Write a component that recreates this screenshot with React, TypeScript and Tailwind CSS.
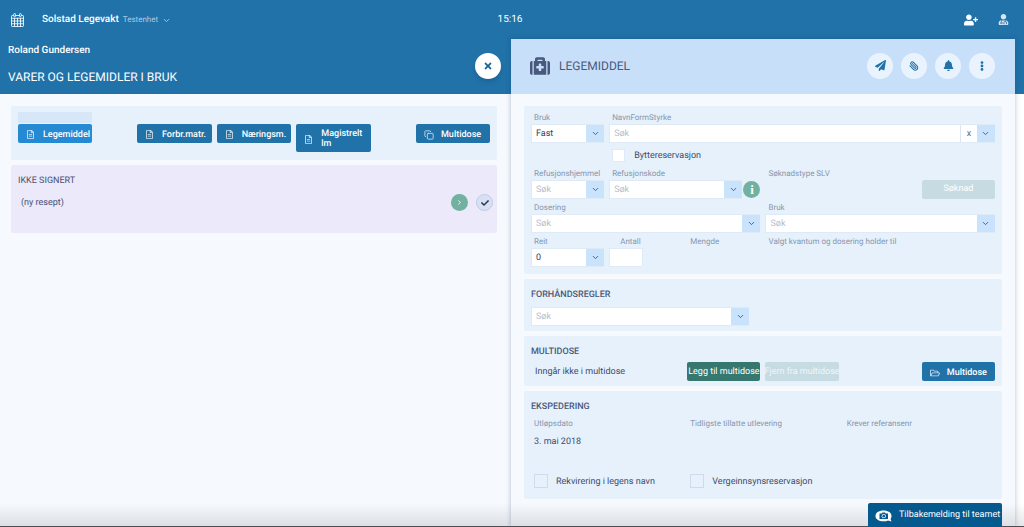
import type { ReactNode } from 'react';
import {
  FaBell,
  FaCheck,
  FaEllipsisV,
  FaMedkit,
  FaPaperPlane,
  FaRegFileAlt,
  FaRegFolderOpen,
  FaTimes,
  FaUserMd,
  FaUserPlus,
} from 'react-icons/fa';
import { ChevronDown, ChevronRight, Copy, Paperclip } from 'lucide-react';
import clsx from 'clsx';

const CalendarIcon = () => (
  <svg viewBox="0 0 26 28" className="h-[14px] w-[13px]" fill="none" stroke="currentColor" strokeWidth="1.7">
    <rect x="1" y="5" width="24" height="22" rx="1.5" />
    <path d="M1 10.500h24M1 16h24M1 21.500h24M7 10.500v16.500M13 10.500v16.500M19 10.500v16.500" />
    <rect x="5.5" y="1" width="3.4" height="6.5" rx="1.5" fill="#2072a9" />
    <rect x="17" y="1" width="3.4" height="6.5" rx="1.5" fill="#2072a9" />
  </svg>
);

const FeedbackIcon = () => (
  <svg viewBox="0 0 34 24" className="h-3 w-[17px] shrink-0">
    <path d="M17 1C7.500 1 1 5.500 1 12s6.500 10.500 16 10.500c3.500 0 6.500-.6 9-1.700L33 23l-1.800-5.200C32.400 16 33 14 33 12 33 5.500 26.500 1 17 1z" fill="#fff" />
    <path d="M9 7h4.500l1.500-2h5l1.500 2H26v11H9z" fill="#04598f" />
    <circle cx="17.500" cy="12.300" r="4.200" fill="#fff" />
    <circle cx="17.500" cy="12.300" r="2.600" fill="#04598f" />
  </svg>
);

interface FieldProps {
  id: string;
  label: string;
  className?: string;
  labelClass?: string;
  children?: ReactNode;
}

const Field = ({ id, label, className, labelClass, children }: FieldProps) => (
  <div className={className}>
    <label htmlFor={id} className={clsx('block h-3 whitespace-nowrap text-[8px] leading-3 text-[#8796ae]', labelClass ?? 'pl-[3px]')}>
      {label}
    </label>
    {children}
  </div>
);

const Arrow = ({ label }: { label: string }) => (
  <button type="button" aria-label={label} className="flex w-[18px] shrink-0 items-center justify-center bg-[#cae3fd] text-[#3f5f86]">
    <ChevronDown size={9} strokeWidth={2.5} />
  </button>
);

const SearchBox = ({ id, label, clearable, className }: { id: string; label: string; clearable?: boolean; className?: string }) => (
  <div className={clsx('flex h-[19px] border border-r-0 border-[#deebf7]', className)}>
    <input
      id={id}
      type="text"
      placeholder="Søk"
      className="min-w-0 flex-1 bg-white pl-1 pt-[2px] text-[9px] text-[#3d4b69] outline-none placeholder:text-[#b9bdc6]"
    />
    {clearable && (
      <button type="button" aria-label="Tøm" className="w-[17px] border-l border-[#dde6f0] bg-white text-[9px] leading-3 text-[#5b6474]">
        x
      </button>
    )}
    <Arrow label={label} />
  </div>
);

const SelectBox = ({ id, value }: { id: string; value: string }) => (
  <div className="flex h-[19px] border border-r-0 border-[#deebf7]">
    <select id={id} className="min-w-0 flex-1 appearance-none bg-white pl-1 pt-[2px] text-[9px] text-[#34405c] outline-none">
      <option>{value}</option>
    </select>
    <span className="pointer-events-none flex w-[18px] items-center justify-center bg-[#cae3fd] text-[#3f5f86]">
      <ChevronDown size={9} strokeWidth={2.5} />
    </span>
  </div>
);

interface IconButtonProps {
  icon: ReactNode;
  children: ReactNode;
  active?: boolean;
}

const IconButton = ({ icon, children, active }: IconButtonProps) => (
  <button
    type="button"
    className={clsx(
      'flex min-h-[19px] w-full items-center gap-2 rounded-[2px] pb-[3px] pl-2 pt-[5px] text-left text-[9px] font-medium leading-[10px] text-white',
      active ? 'bg-[#2589d3]' : 'bg-[#2072a9]',
    )}
  >
    <span className="w-[9px] shrink-0 opacity-80">{icon}</span>
    {children}
  </button>
);

const RoundButton = ({ label, children }: { label: string; children: ReactNode }) => (
  <button type="button" aria-label={label} className="flex size-[26px] items-center justify-center rounded-full bg-[#e9f3fe] text-[#2072a9]">
    {children}
  </button>
);

const Section = ({ title, children }: { title: string; children: ReactNode }) => (
  <section className="rounded-[2px] bg-[#e6f1fc] px-[7px] pt-[10px]">
    <h3 className="text-[9px] font-medium leading-3 text-[#4a5878]">{title}</h3>
    {children}
  </section>
);

const Check = ({ id, label }: { id: string; label: string }) => (
  <div className="col-span-2 flex items-center gap-2 pl-[3px]">
    <input id={id} type="checkbox" className="size-[14px] appearance-none border border-[#cddbea]" />
    <label htmlFor={id} className="pt-px text-[9px] leading-3 text-[#3f4d6d]">{label}</label>
  </div>
);

const TopBar = () => (
  <header className="grid h-[39px] grid-cols-[1fr_auto_1fr] items-center bg-[#2072a9] pl-[11px] pr-[15px] text-white">
    <div className="flex items-center">
      <CalendarIcon />
      <span className="ml-[18px] text-[10px] font-medium leading-3">Solstad Legevakt</span>
      <button type="button" className="ml-1 flex items-center gap-1 pt-px text-[8px] leading-3 text-[#a9cbe6]">
        Testenhet
        <ChevronDown size={9} strokeWidth={2.5} />
      </button>
    </div>
    <time className="text-[10px] leading-3">15:16</time>
    <div className="flex items-center justify-end gap-5">
      <button type="button" aria-label="Legg til pasient"><FaUserPlus size={14} /></button>
      <button type="button" aria-label="Bruker" className="text-[#d3e6f5]"><FaUserMd size={11} /></button>
    </div>
  </header>
);

const LeftPane = () => (
  <div className="bg-[#f6faff]">
    <div className="flex h-[55px] items-center justify-between bg-[#2072a9] pb-[2px] pl-2 pr-[10px] text-white">
      <div className="flex flex-col gap-3 pb-1">
        <p className="text-[10px] font-medium leading-[14px]">Roland Gundersen</p>
        <h1 className="text-[12px] leading-[14px]">VARER OG LEGEMIDLER I BRUK</h1>
      </div>
      <button type="button" aria-label="Lukk" className="flex size-[26px] items-center justify-center rounded-full bg-white text-[#1c6296] shadow-md">
        <FaTimes size={10} />
      </button>
    </div>
    <div className="flex flex-col gap-[5px] pl-[11px] pr-[14px] pt-3">
      <div className="flex min-h-[54px] items-start justify-between rounded-[2px] bg-[#e6f1fc] px-[7px] pb-2 pt-[6px]">
        <div className="w-[74px]">
          <div className="mb-px h-[11px] bg-[#d7e7f8]" />
          <IconButton icon={<FaRegFileAlt size={9} />} active>Legemiddel</IconButton>
        </div>
        <div className="grid w-[234px] grid-cols-3 items-start gap-[5px] pt-3">
          <IconButton icon={<FaRegFileAlt size={9} />}>Forbr.matr.</IconButton>
          <IconButton icon={<FaRegFileAlt size={9} />}>Næringsm.</IconButton>
          <IconButton icon={<FaRegFileAlt size={9} />}>Magistrelt lm</IconButton>
        </div>
        <div className="w-[74px] pt-3">
          <IconButton icon={<Copy size={10} strokeWidth={2} />}>Multidose</IconButton>
        </div>
      </div>
      <section className="rounded-[2px] bg-[#ebe9fa] pb-[22px] pl-[7px] pr-1 pt-[10px] text-[9px] leading-3 text-[#4a5070]">
        <h2>IKKE SIGNERT</h2>
        <div className="mt-[7px] flex items-center gap-2 pl-[3px]">
          <span className="flex-1">(ny resept)</span>
          <button type="button" aria-label="Åpne" className="flex size-[17px] items-center justify-center rounded-full bg-[#72b0a0] text-white">
            <ChevronRight size={7} strokeWidth={3} />
          </button>
          <button type="button" aria-label="Signer" className="flex size-[17px] items-center justify-center rounded-full border border-[#bfcbe6] bg-[#d9e0f4] text-[#2b3558]">
            <FaCheck size={8} />
          </button>
        </div>
      </section>
    </div>
  </div>
);

const DrugForm = () => (
  <form className="grid grid-cols-6 gap-x-[5px] gap-y-[3px] rounded-[2px] bg-[#e6f1fc] px-[7px] pb-[7px] pt-[6px]">
    <Field id="bruk" label="Bruk"><SelectBox id="bruk" value="Fast" /></Field>
    <Field id="navn" label="NavnFormStyrke" className="col-span-5">
      <SearchBox id="navn" label="Velg legemiddel" clearable />
    </Field>
    <div className="col-span-4 col-start-2 flex h-[19px] items-center gap-[9px] pl-[3px]">
      <input id="bytte" type="checkbox" className="size-[13px] appearance-none border border-[#deebf7] bg-white" />
      <label htmlFor="bytte" className="text-[9px] leading-3 text-[#3f4d6d]">Byttereservasjon</label>
    </div>
    <Field id="hjemmel" label="Refusjonshjemmel" className="col-start-1">
      <SearchBox id="hjemmel" label="Velg refusjonshjemmel" />
    </Field>
    <Field id="kode" label="Refusjonskode" className="col-span-2">
      <div className="flex items-center gap-px">
        <SearchBox id="kode" label="Velg refusjonskode" className="min-w-0 flex-1" />
        <button type="button" aria-label="Informasjon" className="size-[17px] shrink-0 rounded-full bg-[#72b0a0] font-['Liberation_Serif',serif] text-[13px] font-bold leading-none text-white">
          i
        </button>
      </div>
    </Field>
    <Field id="soknad" label="Søknadstype SLV" className="col-span-2" />
    <button id="soknad" type="button" disabled className="h-[19px] self-end rounded-[2px] bg-[#c7dce2] pt-px text-[9px] text-white">
      Søknad
    </button>
    <Field id="dosering" label="Dosering" className="col-span-3"><SearchBox id="dosering" label="Velg dosering" /></Field>
    <Field id="bruk2" label="Bruk" className="col-span-3"><SearchBox id="bruk2" label="Velg bruk" /></Field>
    <Field id="reit" label="Reit"><SelectBox id="reit" value="0" /></Field>
    <Field id="antall" label="Antall" labelClass="pl-[11px]">
      <input id="antall" type="text" className="block h-[19px] w-[34px] border border-[#deebf7] bg-white px-1 text-[9px] outline-none" />
    </Field>
    <p className="pl-[3px] text-[8px] leading-3 text-[#8796ae]">Mengde</p>
    <p className="col-span-3 pl-[3px] text-[8px] leading-3 text-[#8796ae]">Valgt kvantum og dosering holder til</p>
  </form>
);

const RightPane = () => (
  <div className="relative bg-[#f6faff] shadow-[0_0_5px_rgba(30,50,90,0.3)]">
    <div className="flex h-[55px] items-center bg-[#c8dff9] pb-[2px] pl-[19px] pr-5">
      <FaMedkit size={20} className="text-[#48597d]" />
      <h2 className="ml-[9px] flex-1 text-[12px] text-[#48597d]">LEGEMIDDEL</h2>
      <div className="flex gap-2">
        <RoundButton label="Send"><FaPaperPlane size={11} /></RoundButton>
        <RoundButton label="Vedlegg"><Paperclip size={10} strokeWidth={2.5} className="-scale-x-100" /></RoundButton>
        <RoundButton label="Varsler"><FaBell size={11} /></RoundButton>
        <RoundButton label="Mer"><FaEllipsisV size={10} /></RoundButton>
      </div>
    </div>
    <div className="flex flex-col gap-[5px] px-[13px] pb-7 pt-3">
      <DrugForm />
      <Section title="FORHÅNDSREGLER">
        <div className="mb-[5px] mt-[6px] w-[47%]">
          <SearchBox id="forhand" label="Velg forhåndsregel" />
        </div>
      </Section>
      <Section title="MULTIDOSE">
        <div className="mb-[5px] mt-1 grid grid-cols-6 items-center gap-x-[5px]">
          <p className="col-span-2 pl-1 text-[9px] leading-3 text-[#3f4d6d]">Inngår ikke i multidose</p>
          <button type="button" className="flex h-[19px] items-center justify-center whitespace-nowrap rounded-[2px] bg-[#36786f] pt-[2px] text-[9px] text-white">
            Legg til multidose
          </button>
          <button type="button" disabled className="flex h-[19px] items-center justify-center whitespace-nowrap rounded-[2px] bg-[#c7dce2] pt-[2px] text-[9px] text-[#eef6fa]">
            Fjern fra multidose
          </button>
          <div className="col-start-6">
            <IconButton icon={<FaRegFolderOpen size={10} />}>Multidose</IconButton>
          </div>
        </div>
      </Section>
      <Section title="EKSPEDERING">
        <div className="mt-[5px] grid grid-cols-6 gap-x-[5px] text-[8px] leading-3 text-[#8796ae]">
          <p className="col-span-2 pl-[3px]">Utløpsdato</p>
          <p className="col-span-2 pl-[3px]">Tidligste tillatte utlevering</p>
          <p className="col-span-2 pl-[3px]">Krever referansenr</p>
        </div>
        <p className="mt-[6px] pl-[3px] text-[9px] leading-3 text-[#3f4d6d]">3. mai 2018</p>
        <div className="mb-[11px] mt-[26px] grid grid-cols-6 gap-x-[5px]">
          <Check id="rekv" label="Rekvirering i legens navn" />
          <Check id="verge" label="Vergeinnsynsreservasjon" />
        </div>
      </Section>
    </div>
  </div>
);

export default function App() {
  return (
    <div className="flex min-h-screen flex-col bg-white font-[Roboto,sans-serif] [text-rendering:geometricPrecision] [&_button]:[text-rendering:inherit] [&_input]:[text-rendering:inherit] [&_select]:[text-rendering:inherit]">
      <TopBar />
      <main className="grid flex-1 grid-cols-[511fr_504fr_9px]">
        <LeftPane />
        <RightPane />
        <div className="h-[55px] bg-[#2072a9]" />
      </main>
      <div className="pointer-events-none fixed inset-x-0 bottom-0 h-6 border-b border-[#4b4e55] bg-linear-to-b from-transparent to-black/10" />
      <button
        type="button"
        className="fixed bottom-0 right-[22px] flex h-6 w-[134px] items-center gap-[7px] whitespace-nowrap rounded-t-[2px] bg-[#04598f] pl-[7px] pt-px text-[9px] text-white"
      >
        <FeedbackIcon />
        Tilbakemelding til teamet
      </button>
    </div>
  );
}
